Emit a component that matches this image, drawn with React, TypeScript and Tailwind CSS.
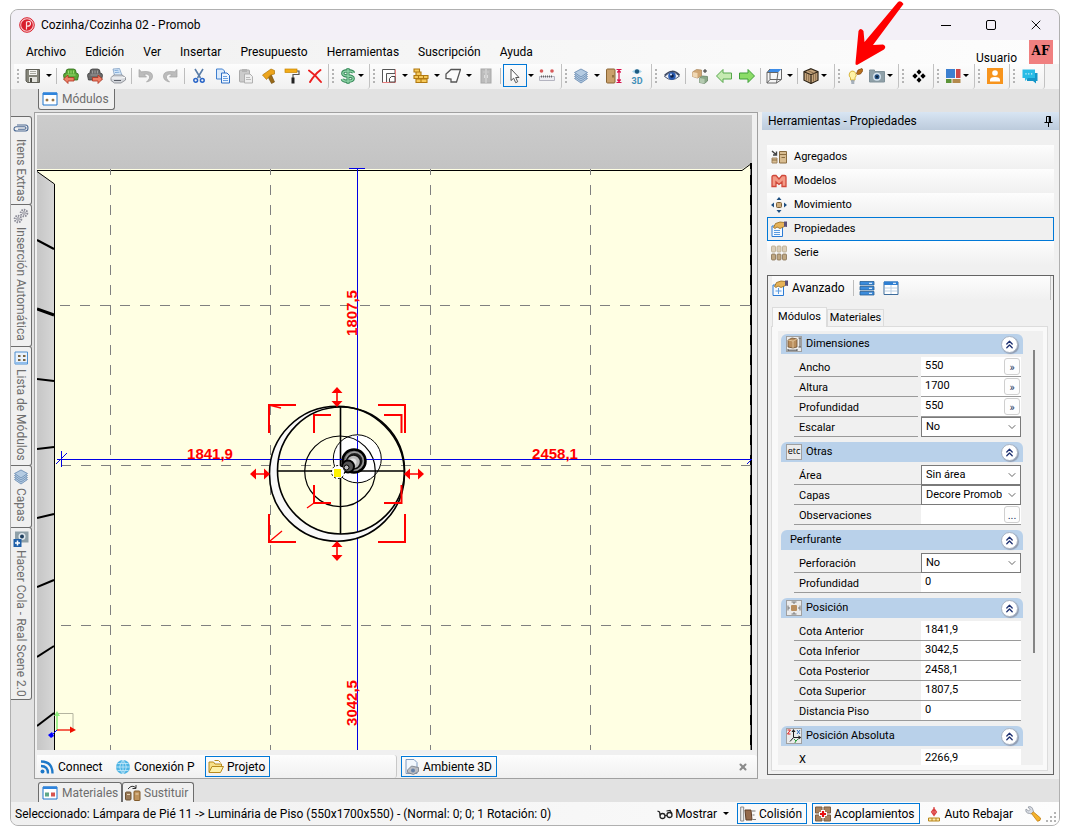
import { useState } from "react";
import type { ReactNode } from "react";
import { ChevronDown, ChevronsUp, X } from "lucide-react";

type TIconProps = {
    children: ReactNode;
    size?: number;
};

function Ico({ children, size = 16 }: TIconProps) {
    return (
        <svg width={size} height={size} viewBox="0 0 16 16" fill="none" className="shrink-0" aria-hidden="true">
            {children}
        </svg>
    );
}

const SaveIcon = () => (
    <Ico>
        <path d="M1 1.500h13.500v13H2.500L1 13z" fill="#85857a" stroke="#5c5c54" />
        <rect x="4" y="2" width="8" height="5" fill="#f4f4f0" />
        <path d="M5 3.500h6M5 5.500h6" stroke="#a9a9a0" />
        <rect x="4" y="9" width="8" height="5" fill="#e2e2dc" />
        <rect x="5" y="10" width="2" height="4" fill="#4c4c44" />
    </Ico>
);

const Chair = ({ dark }: { dark?: boolean }) => (
    <Ico>
        <path
            d="M3 4Q3 1 5.500 1h5Q13 1 13 4v1q2.500 0 2.500 2.500L14.500 12h-13L.500 7.500Q.500 5 3 5z"
            fill={dark ? "#6a6a6a" : "#5aa838"}
            stroke={dark ? "#3c3c3c" : "#2f6a18"}
            strokeWidth=".8"
        />
        <path d="M5.500 2.500v3M8 2.500v3M10.500 2.500v3M3.500 7h9" stroke={dark ? "#9d9d9d" : "#9adc6c"} />
        {dark ? (
            <path d="M15.500 11L11 7v2.500H5.500v3.500H11v2.500z" fill="#ee8068" stroke="#b03420" strokeWidth=".8" />
        ) : (
            <path d="M.500 11L5 7v2.500h6v3.500H5v2.500z" fill="#ee8068" stroke="#b03420" strokeWidth=".8" />
        )}
    </Ico>
);

const PrinterIcon = () => (
    <Ico>
        <path d="M3 1l6.500-.5 2.500 7H4.500z" fill="#d8eafa" stroke="#7f9ec2" strokeWidth=".8" />
        <path d="M4.500 2.500l4-.3M5 4.500l4.500-.3" stroke="#6c9ad0" strokeWidth=".8" />
        <path d="M1 9.500L4 7h8l3.500 2.500V12L11 15H4.500L1 12.500z" fill="#d4d7dc" stroke="#80848c" strokeWidth=".8" />
        <path d="M1.500 10h9.500l4-.5" stroke="#fff" />
        <path d="M4 12.500h7" stroke="#5b5f68" />
    </Ico>
);

const UndoIcon = ({ flip }: { flip?: boolean }) => (
    <Ico>
        <path
            d={
                flip
                    ? "M15 1.500V9H7.500L10 6.500Q6.500 5 4.800 7.500T7.500 14Q1 12.500 1.500 7.500T12.500 3.800z"
                    : "M1 1.500V9h7.500L6 6.500Q9.500 5 11.200 7.500T8.500 14Q15 12.500 14.500 7.500T3.500 3.800z"
            }
            fill="#bcbcbc"
            stroke="#a4a4a4"
            strokeWidth=".7"
        />
    </Ico>
);

const CutIcon = () => (
    <Ico>
        <path d="M4 1l5.500 9M12 1L6.500 10" stroke="#5b7ea8" strokeWidth="1.600" />
        <circle cx="4.700" cy="12.300" r="1.900" stroke="#2a66c8" strokeWidth="1.500" />
        <circle cx="11.300" cy="12.300" r="1.900" stroke="#2a66c8" strokeWidth="1.500" />
    </Ico>
);

const CopyIcon = () => (
    <Ico>
        <path d="M1.500 1h6l2 2v8h-8z" fill="#dcebfb" stroke="#3f7fcf" />
        <path d="M6.500 5h5.500l2.500 2.500v7.500h-8z" fill="#eef6ff" stroke="#2e6fc4" />
        <path d="M8 8.500h4M8 10.500h5M8 12.500h5" stroke="#6ba0e0" />
    </Ico>
);

const PasteIcon = () => (
    <Ico>
        <rect x="1.500" y="2" width="10" height="12" rx="1" fill="#cbcbcb" stroke="#ababab" />
        <rect x="4" y="1" width="5" height="3" fill="#b4b4b4" />
        <path d="M6.500 6h5.500l2.500 2.500v6.500h-8z" fill="#eee" stroke="#b0b0b0" />
        <path d="M8 9.500h4M8 11.500h5" stroke="#bbb" />
    </Ico>
);

const HammerIcon = () => (
    <Ico>
        <path d="M6.500 8l3.500-2 3.500 8-3 1.500z" fill="#9a6a18" stroke="#6b480c" strokeWidth=".6" />
        <path d="M1.500 7L10 1l3.500 1.500V6l-4 1-4 4.500z" fill="#eca41d" stroke="#b07808" strokeWidth=".7" />
    </Ico>
);

const RollerIcon = () => (
    <Ico>
        <rect x="1" y="1" width="12" height="3.500" fill="#f2ac18" stroke="#c98500" strokeWidth=".7" />
        <path d="M13 3h2v3.500H9V10" stroke="#555" strokeWidth="1.200" />
        <rect x="7.500" y="9.500" width="3" height="6" fill="#222" />
    </Ico>
);

const DeleteIcon = () => (
    <Ico>
        <path d="M2 2.500q6 4 12 11.500M13.500 2Q8 6 3 14" stroke="#ec2020" strokeWidth="2" strokeLinecap="round" />
    </Ico>
);

const DollarIcon = () => (
    <Ico>
        <path d="M8 0v16" stroke="#3a8a5c" strokeWidth="3" />
        <path d="M13.500 5Q13 2.800 8 2.800T2.800 5.300 8 8t5.200 2.600T8 13.200 2.300 11" stroke="#3a8a5c" strokeWidth="3.400" />
        <path d="M13.500 5Q13 2.800 8 2.800T2.800 5.300 8 8t5.200 2.600T8 13.200 2.300 11M8 .500v15" stroke="#8fd6a8" strokeWidth="1.300" />
    </Ico>
);

const PlanIcon = () => (
    <Ico>
        <path d="M1.500 14.500v-13H14v4H5.500v9z" fill="#fff" stroke="#555" />
        <path d="M1.500 14.500H14.500V1.500" stroke="#e88080" />
        <path d="M8.500 14v-3.500l2-2h3.500V14z" fill="#fff" stroke="#444" />
    </Ico>
);

const BrickIcon = () => (
    <Ico>
        <g fill="#f6c95a" stroke="#b07810" strokeWidth="1.100">
            <path d="M1 1h5.500v3H1zM1 7.500h4.500v3H1zM5.500 7.500h5v3h-5zM10.500 7.500h4.500v3h-4.500zM3 11h5v3.500H3zM8 11h6v3.500H8zM3 4h5v3.500H3z" />
        </g>
    </Ico>
);

const ShapeIcon = () => (
    <Ico>
        <path d="M6 1.500h9.500L11.500 14H6V11L1 10.500V6z" fill="#fafafa" stroke="#555" strokeWidth="1.300" />
    </Ico>
);

const CabinetIcon = () => (
    <Ico>
        <rect x="3" y="1" width="10" height="14" fill="#bcbcbc" stroke="#a8a8a8" />
        <path d="M8 1v14M5.500 4h1M9.500 4h1M6.500 7v3M9.500 7v3" stroke="#dedede" />
    </Ico>
);

const CursorIcon = () => (
    <Ico>
        <path d="M4 1v11.500l2.700-2.300 2 4.500 2-1-2-4.200H12z" fill="#fff" stroke="#555" />
    </Ico>
);

const MeasureIcon = () => (
    <Ico>
        <circle cx="2.500" cy="3" r="1.800" fill="#d85a5a" />
        <circle cx="13" cy="3" r="1.800" fill="#d85a5a" />
        <path d="M.500 8.500h15v4H.500z" fill="#ececf2" stroke="#b4b4c0" />
        <path d="M2.500 7.500v2M4.500 7.500v2M6.500 7.500v2M8.500 7.500v2M10.500 7.500v2M12.500 7.500v2" stroke="#666" />
    </Ico>
);

const LayersIcon = () => (
    <Ico>
        {[11.5, 9.5, 7.5, 5.5].map((y) => (
            <path
                key={y}
                d={`M1.500 ${y - 1}L8 ${y - 4.5}l6.500 3.500L8 ${y + 3.5}z`}
                fill="#b4cbe2"
                stroke="#6f90b4"
                strokeWidth=".9"
            />
        ))}
    </Ico>
);

const DoorIcon = () => (
    <Ico>
        <rect x=".500" y="1" width="8.500" height="14" rx="1" fill="#c9a06b" stroke="#8a6534" />
        <path d="M7 7v2.500" stroke="#5b4018" />
        <path
            d="M10.500 1.500h5M10.500 14.500h5M13 2v12M11.300 4.500L13 2.500l1.700 2M11.300 11.500l1.700 2 1.700-2"
            stroke="#d8104c"
            strokeWidth="1.200"
        />
    </Ico>
);

const Eye3DIcon = () => (
    <Ico>
        <path d="M3 3.500Q8-1 13 3.500 8 8 3 3.500z" fill="#a9d6ec" />
        <circle cx="8" cy="3.500" r="2.200" fill="#1d5a80" />
        <text x="8" y="15.500" textAnchor="middle" fontSize="9" fontWeight="bold" fill="#3f8fb8" fontFamily="Roboto, sans-serif">
            3D
        </text>
    </Ico>
);

const EyeIcon = () => (
    <Ico>
        <path d="M.500 8.500Q8 .500 15.500 8 8 15 .500 8.500z" fill="#f1f3f8" stroke="#4a5670" />
        <path d="M.500 7.500Q8-.5 15.500 7" stroke="#3b4660" strokeWidth="1.500" />
        <circle cx="8" cy="8" r="3.800" fill="#2a5cb4" />
        <circle cx="8" cy="8" r="1.800" fill="#0c1f48" />
        <circle cx="7" cy="6.500" r="1" fill="#dce9ff" />
    </Ico>
);

const BoxesIcon = () => (
    <Ico>
        <path d="M.500 4l4-2.500 5 .5v6l-4 2-5-1.500z" fill="#d0a673" stroke="#a8845a" strokeWidth=".7" />
        <path d="M.500 4l5 1v5l-5-1.500z" fill="#f0d8b4" />
        <path d="M7.500 10l3-2 5 .5V13l-3 2.500-5-1z" fill="#8aa888" stroke="#5c7a5a" strokeWidth=".7" />
        <path d="M7.500 10l5 1v4.500l-5-1z" fill="#b4cab0" />
        <path d="M13 1v4M11 3h4" stroke="#333" />
    </Ico>
);

const GreenArrow = ({ right }: { right?: boolean }) => (
    <Ico>
        {right ? (
            <path d="M15.500 8L9 1.500V5H.500v6H9v3.500z" fill="#8cdc68" stroke="#3f9f38" />
        ) : (
            <path d="M.500 8L7 1.500V5h8.500v6H7v3.500z" fill="#c6eab2" stroke="#57a84c" />
        )}
    </Ico>
);

const WireCubeIcon = () => (
    <Ico>
        <path d="M4 1h11.500L12 4.500H1z" fill="#3c8ce8" />
        <path d="M1 4.500h11L10.500 15H1zM15.500 1v10.500L10.500 15M4 5v6.500L1 15M4 11.500h11M4 1L1 4.500" stroke="#666" />
    </Ico>
);

const WoodCubeIcon = () => (
    <Ico>
        <path d="M8 .700l7 3v8.500l-7 3.300-7-3.300V3.700z" fill="#c4a47c" stroke="#2e2417" strokeWidth="1.200" />
        <path d="M1 3.700l7 3 7-3M8 6.700v8.500" stroke="#2e2417" strokeWidth="1.200" />
        <path d="M3.500 5v7.500M5.700 6v7.500M10.500 6v7.500M12.700 5v7.500M4.500 2.500l7 3" stroke="#7e6240" strokeWidth=".8" />
    </Ico>
);

const BulbIcon = () => (
    <Ico>
        <path d="M5 3a4 4 0 0 1 3 6.800V12H3.500V9.800A4 4 0 0 1 5 3z" fill="#fff3a8" stroke="#d9b63c" />
        <path d="M4 13h3.500M4.300 15h3" stroke="#8d9aa8" strokeWidth="1.400" />
        <path d="M9.500 5.500l1.500-3.500 4-1.500 1 2L13.500 6l-3 .5z" fill="#b8701e" stroke="#7a400c" strokeWidth=".7" />
    </Ico>
);

const CameraIcon = () => (
    <Ico>
        <path d="M.500 3.500V2h5v1.500h10v10.500H.500z" fill="#8fa0a8" stroke="#80929a" />
        <circle cx="8" cy="8.800" r="4" fill="#d4e2ee" />
        <circle cx="8" cy="8.800" r="2.500" fill="#234f80" />
        <circle cx="8" cy="8.800" r="1" fill="#0c1a2c" />
    </Ico>
);

const DiamondsIcon = () => (
    <Ico>
        <path d="M8 1.300L10.500 4 8 6.700 5.500 4zM8 9.300l2.500 2.700L8 14.700 5.500 12zM4 5.300L6.700 8 4 10.700 1.300 8zM12 5.300L14.700 8 12 10.700 9.300 8z" fill="#000" />
    </Ico>
);

const WindowIcon = () => (
    <Ico>
        <path d="M1 1h9v9H1z" fill="#3c80d0" />
        <path d="M11 1h4.500v9H11z" fill="#cc4848" />
        <path d="M1 11h5.500v4H1z" fill="#5c9438" />
        <path d="M7.500 11h8v4h-8z" fill="#b48a4c" />
    </Ico>
);

const UserIcon = () => (
    <Ico>
        <path d="M0 0h16v16H0z" fill="#f7941d" />
        <circle cx="8" cy="5" r="2.800" fill="#fff" />
        <path d="M3 13.500V12q0-3 5-3t5 3v1.500z" fill="#fff" />
    </Ico>
);

const ChatIcon = () => (
    <Ico>
        <path d="M5 5h10.500v8H14v2.500L11 13H5z" fill="#1496c8" />
        <path d="M.500 1.500H13v8.500H6L3 13v-3H.500z" fill="#29bce6" />
        <path d="M3.500 5.800h1M6.300 5.800h1M9.200 5.800h1" stroke="#fff" strokeWidth="1.200" />
    </Ico>
);

const ModulesIcon = () => (
    <Ico>
        <path d="M1 2h14v12H1z" fill="#fff" stroke="#1f74cc" />
        <path d="M1 1.500h14v2.500H1z" fill="#2f84dc" />
        <circle cx="5" cy="9" r="1.600" fill="#c8a068" />
        <circle cx="11" cy="9" r="1.600" fill="#c8a068" />
        <path d="M5 8v2M11 8v2" stroke="#5a4a34" />
    </Ico>
);

const MaterialsIcon = () => (
    <Ico>
        <path d="M1 2h14v12H1z" fill="#fff" stroke="#1f74cc" />
        <path d="M1 1.500h14V4H1z" fill="#2f84dc" />
        <path d="M3 7.500h4v4H3z" fill="#5fa787" />
        <path d="M9 7.500h4v4H9z" fill="#d85450" />
    </Ico>
);

const SwapIcon = () => (
    <Ico>
        <path d="M3 4q4-5 8-1M11 0v3.500H7.500" stroke="#333" />
        <rect x=".500" y="7" width="5.500" height="8" rx="1" fill="#9a7a58" stroke="#6d5233" />
        <rect x="9" y="6" width="6" height="9.500" rx="1" fill="#bf935c" stroke="#805a2a" />
        <path d="M2 9.500h3M10.500 9h3" stroke="#ecd6b4" />
    </Ico>
);

const ClipIcon = () => (
    <Ico>
        <path
            d="M4 5h8.500q2.500 0 2.500 3t-2.500 3H3.500Q1 11 1 9t2-2.200h8.500q1.500 0 1.500 1.200T11.500 9.200H5"
            stroke="#4c6a94"
            strokeWidth="1.100"
        />
    </Ico>
);

const GearsIcon = () => (
    <Ico>
        <circle cx="11" cy="5" r="3.300" stroke="#8e8e9a" strokeWidth="2" strokeDasharray="1.500 1" />
        <circle cx="11" cy="5" r="1.300" stroke="#8e8e9a" />
        <circle cx="5" cy="11" r="3.300" stroke="#8e8e9a" strokeWidth="2" strokeDasharray="1.500 1" />
        <circle cx="5" cy="11" r="1.300" stroke="#8e8e9a" />
    </Ico>
);

const ListIcon = () => (
    <Ico>
        <path d="M2 2h12.500v12H2z" fill="#e8f1fb" stroke="#4e8fd0" />
        <path d="M2.500 13h11.500" stroke="#8fbdec" strokeWidth="2" />
        <path d="M5 5h2.500v2H5zM10 5h2.500v2H10zM5 9h2.500v2H5zM10 9h2.500v2H10z" fill="#7a6440" />
    </Ico>
);

const QueueIcon = () => (
    <Ico>
        <path d="M2 .500h13.500v11H2z" fill="#8fa0a8" />
        <circle cx="9" cy="5.500" r="3.500" fill="#dfe8ee" />
        <circle cx="9" cy="5.500" r="2" fill="#20405e" />
        <path d="M.500 8h8v8h-8z" fill="#1f5fa8" />
        <path d="M4.500 9.500v5M2 12h5" stroke="#fff" strokeWidth="1.500" />
    </Ico>
);

const AddIcon = () => (
    <Ico>
        <path d="M1 2l4.500 4M5.500 2.500V6H2" stroke="#444" strokeWidth="1.400" />
        <path d="M1 9h5v5H1z" fill="#d8bc90" stroke="#a08460" />
        <path d="M8.500 2.500h7v11.500h-7z" fill="#d8bc90" stroke="#8a6c40" />
        <path d="M1 11h5M8.500 5.500h7M10.500 8.500h3.500" stroke="#8a6c40" />
    </Ico>
);

const ModelsIcon = () => (
    <Ico>
        <path
            d="M1 13.500V4q0-1.500 1.500-1.500H5L8 6l3-3.500h2.500Q15 2.500 15 4v9.500h-4V9L8 11.500 5 9v4.500z"
            fill="#f39a86"
            stroke="#d0483a"
            strokeWidth="1.300"
        />
    </Ico>
);

const MoveIcon = () => (
    <Ico>
        <rect x="5.500" y="5.500" width="5" height="5" rx="1" fill="#cfae7e" stroke="#7e6238" />
        <path d="M8 0l2.500 3h-5zM8 16l2.500-3h-5zM0 8l3-2.500v5zM16 8l-3-2.500v5z" fill="#1f4f80" />
    </Ico>
);

const PropsIcon = ({ plus }: { plus?: boolean }) => (
    <Ico>
        <path d="M1 5h10.500v10.500H1z" fill="#f4f9ff" stroke="#2a7ad4" />
        {plus ? (
            <path d="M6.500 8v6M3.500 11h6" stroke="#5c9ce0" />
        ) : (
            <path d="M3 9.500h6M3 11.500h6M3 13.500h6" stroke="#5c9ce0" />
        )}
        <path d="M2.500 6.500L4.500 2.500 9 1l4.500.5V5.500L9 7.500 6 6 4 7.500z" fill="#e6b258" stroke="#94691c" strokeWidth=".8" />
        <path d="M13 .500h3V6l-3-.5z" fill="#5a5078" />
    </Ico>
);

const SeriesIcon = () => (
    <Ico>
        {[0, 5.5, 11].map((x) => (
            <g key={x}>
                <rect x={x + 0.5} y="1" width="4" height="6" rx="1" fill="#dccfba" stroke="#b8a98c" strokeWidth=".8" />
                <rect x={x + 0.5} y="9" width="4" height="6" rx="1" fill="#bfa782" stroke="#857050" strokeWidth=".8" />
            </g>
        ))}
    </Ico>
);

const RowsIcon = () => (
    <Ico>
        <path d="M1 1.500h14v3.500H1zM1 6.500h14V10H1zM1 11.500h14V15H1z" fill="#3c8cdc" stroke="#2a5f94" strokeWidth=".8" />
        <path d="M10 3.300h3M10 8.300h3M10 13.300h3" stroke="#fff" />
    </Ico>
);

const TableIcon = () => (
    <Ico>
        <path d="M1 2h14v12.500H1z" fill="#fff" stroke="#3d6c9c" />
        <path d="M1 1.500h14V5H1z" fill="#2f7fd2" />
        <path d="M10 3.300h3" stroke="#fff" />
        <path d="M2 8h12M2 11h12M8 5v9" stroke="#bcd0e4" />
    </Ico>
);

const DimIcon = () => (
    <Ico>
        <path d="M2 4l4-2 5 1v8l-4 1-5-1z" fill="#b98e5e" stroke="#6f5130" strokeWidth=".8" />
        <path d="M2 4l5 1 4-2M7 5v7" stroke="#e8cfa6" strokeWidth=".8" />
        <path d="M12.500 2h3M12.500 11h3M14 2v9M2 13v2.500M11 13v2.500M2 14.200h9" stroke="#555" />
    </Ico>
);

const PosIcon = () => (
    <Ico>
        <rect x="5" y="5" width="6" height="6" rx="1" fill="#b98e5e" />
        <path d="M5.500 2h5M8 2v2M5.500 14h5M8 12v2M2 5.500v5M2 8h2M14 5.500v5M12 8h2" stroke="#777" />
    </Ico>
);

const AxisIcon = () => (
    <Ico>
        <path d="M7.500 3v6.500H14M7.500 9.500L4 13.500" stroke="#222" />
        <path d="M7.500 1L5.500 4h4zM15.500 9.500l-3-2v4z" fill="#222" />
        <path d="M1.500 2h3l-3 4h3" stroke="#e02020" />
        <path d="M11 2l3 4M14 2l-3 4" stroke="#2f6fc0" />
        <path d="M8 11l2 2 2-2M10 13l-1.500 2.500" stroke="#2a9a3a" />
    </Ico>
);

const ConnectIcon = () => (
    <Ico>
        <circle cx="3.500" cy="12.500" r="2" fill="#1d78c8" />
        <path d="M2 7q7 0 7 7.500M2 2.500q11.500 0 11.500 12" stroke="#1d78c8" strokeWidth="2.300" />
    </Ico>
);

const GlobeIcon = () => (
    <Ico>
        <circle cx="8" cy="8" r="7" fill="#4db4e4" />
        <path
            d="M8 1v14M1 8h14M2.500 4.500h11M2.500 11.500h11M8 1Q1.500 8 8 15M8 1q6.500 7 0 14"
            stroke="#c8eafa"
            strokeWidth=".8"
        />
    </Ico>
);

const FolderIcon = () => (
    <Ico>
        <path d="M1 13V3h4.500l1.500 2h6.500v3" fill="#f7e08a" stroke="#b88a1c" />
        <path d="M1 13.500L4 7.500h11.500l-3 6z" fill="#fdf0a8" stroke="#b88a1c" />
        <path d="M6.500 1.500h4l2 2" stroke="#b88a1c" />
    </Ico>
);

const RoomIcon = () => (
    <Ico>
        <path d="M2 .500h8l3 3v11H2z" fill="#f2f7fd" stroke="#7d9ac0" />
        <path d="M3.500 11l4-4 7 1.500v4l-5 3-6-2z" fill="#b9bcc2" stroke="#777b84" strokeWidth=".8" />
        <circle cx="9" cy="11.500" r="2" fill="#6882a8" />
    </Ico>
);

const GlassesIcon = () => (
    <Ico>
        <circle cx="5.500" cy="10" r="2.500" stroke="#222" strokeWidth="1.300" />
        <circle cx="12.500" cy="9" r="2.500" stroke="#222" strokeWidth="1.300" />
        <path d="M.500 5l2 1 .8 3.500M8 9.500h2M9.500 5l3.500-.5 2 3" stroke="#222" strokeWidth="1.200" />
    </Ico>
);

const CollisionIcon = () => (
    <Ico>
        <path d="M.700 1h3v14h-3z" fill="#eee" stroke="#888" />
        <path d="M5 4h6l1 10H6z" fill="#946a4c" stroke="#5e3e26" />
        <path d="M12 5h3.500M12.500 9h2M12.500 13.500h3.500" stroke="#777" />
    </Ico>
);

const CouplingIcon = () => (
    <Ico>
        <path d="M.500 1h6.500v6H.500zM9 1h6.500v6H9zM.500 9h6.500v6H.500zM9 9h6.500v6H9z" fill="#a5815f" stroke="#7a5c40" />
        <path d="M8 4v8M4 8h8" stroke="#fff" strokeWidth="4" />
        <path d="M8 5v6M5 8h6" stroke="#e81010" strokeWidth="2.200" />
    </Ico>
);

const LowerIcon = () => (
    <Ico>
        <path d="M8 1v8M5.500 6L8 9.500 10.500 6 8 2.500z" fill="#f08080" stroke="#d84040" strokeWidth="1.200" />
        <path d="M2.500 12h11v3h-11z" fill="#fbe8a8" stroke="#b8861c" />
        <path d="M6 12v3M10 12v3" stroke="#b8861c" />
    </Ico>
);

const WrenchIcon = () => (
    <Ico>
        <path
            d="M1 3l2.500 2L5 3.500 3 1q4-1.500 5 3l.500 2L6.500 8 4.500 7.500Q0 7 1 3z"
            fill="#d8dce4"
            stroke="#8c929c"
            strokeWidth=".8"
        />
        <path d="M6.500 7.500l2-1.500 7 6q.5 3-3 3.300z" fill="#f5b32c" stroke="#c07c10" strokeWidth=".8" />
    </Ico>
);

function Caret() {
    return (
        <svg width="6" height="3" viewBox="0 0 6 3" className="shrink-0" aria-hidden="true">
            <path d="M0 0h6L3 3z" fill="#000" />
        </svg>
    );
}

function Grip() {
    return (
        <div className="w-2 h-[23px] shrink-0 flex flex-col items-center justify-center gap-[2px]">
            <i className="w-[2px] h-[2px] bg-[#b4b4b4]" />
            <i className="w-[2px] h-[2px] bg-[#b4b4b4]" />
            <i className="w-[2px] h-[2px] bg-[#b4b4b4]" />
            <i className="w-[2px] h-[2px] bg-[#b4b4b4]" />
        </div>
    );
}

function Sep() {
    return (
        <div className="w-[5px] h-[23px] shrink-0 flex items-center justify-center">
            <i className="w-px h-4 bg-[#bdbdbd]" />
        </div>
    );
}

type TToolProps = {
    label: string;
    children: ReactNode;
    wide?: boolean;
};

function Tool({ label, children, wide }: TToolProps) {
    return (
        <button
            aria-label={label}
            className={`${wide ? "w-6" : "w-[23px]"} h-[23px] shrink-0 flex items-center justify-center hover:bg-sky-100`}
        >
            {children}
        </button>
    );
}

function DropTool({ label, children, tight }: TToolProps & { tight?: boolean }) {
    return (
        <button
            aria-label={label}
            className={`h-[23px] shrink-0 flex items-center pl-[3px] hover:bg-sky-100 ${
                tight ? "w-[29px] gap-[2px]" : "w-8 gap-[5px]"
            }`}
        >
            {children}
            <Caret />
        </button>
    );
}

function ToolGroup({ width, children }: { width: string; children: ReactNode }) {
    return (
        <div
            className={`${width} h-[25px] shrink-0 flex items-start border-r border-[#c2c2c2] rounded-b-[3px] bg-linear-to-b from-[#fdfdfd] to-[#f0f0f0]`}
        >
            <Grip />
            {children}
        </div>
    );
}

function Toolbar() {
    return (
        <div className="h-[25px] shrink-0 pl-[3px] flex bg-[#f3f3f3] overflow-hidden">
            <ToolGroup width="w-[315px]">
                <DropTool label="Guardar"><SaveIcon /></DropTool>
                <Sep />
                <Tool label="Importar" wide><Chair /></Tool>
                <Tool label="Exportar"><Chair dark /></Tool>
                <Tool label="Imprimir"><PrinterIcon /></Tool>
                <Sep />
                <Tool label="Deshacer" wide><UndoIcon /></Tool>
                <Tool label="Rehacer" wide><UndoIcon flip /></Tool>
                <Sep />
                <Tool label="Cortar" wide><CutIcon /></Tool>
                <Tool label="Copiar"><CopyIcon /></Tool>
                <Tool label="Pegar"><PasteIcon /></Tool>
                <Tool label="Martillo"><HammerIcon /></Tool>
                <Tool label="Pintar"><RollerIcon /></Tool>
                <Tool label="Eliminar"><DeleteIcon /></Tool>
            </ToolGroup>
            <ToolGroup width="w-[41px]">
                <DropTool label="Precio" tight><DollarIcon /></DropTool>
            </ToolGroup>
            <ToolGroup width="w-[192px]">
                <DropTool label="Planta"><PlanIcon /></DropTool>
                <DropTool label="Paredes"><BrickIcon /></DropTool>
                <DropTool label="Formas"><ShapeIcon /></DropTool>
                <Tool label="Armario" wide><CabinetIcon /></Tool>
                <Sep />
                <button
                    aria-label="Seleccionar"
                    className="w-6 h-[23px] shrink-0 flex items-center justify-center border border-[#0078d7]"
                >
                    <CursorIcon />
                </button>
                <button aria-label="Opciones" className="w-2 h-[23px] shrink-0 flex items-center justify-center">
                    <Caret />
                </button>
                <Tool label="Cotas" wide><MeasureIcon /></Tool>
            </ToolGroup>
            <ToolGroup width="w-[90px]">
                <DropTool label="Capas"><LayersIcon /></DropTool>
                <Tool label="Altura"><DoorIcon /></Tool>
                <Tool label="Vista 3D"><Eye3DIcon /></Tool>
            </ToolGroup>
            <ToolGroup width="w-[183px]">
                <Tool label="Visualizar"><EyeIcon /></Tool>
                <Sep />
                <Tool label="Bloques" wide><BoxesIcon /></Tool>
                <Tool label="Anterior"><GreenArrow /></Tool>
                <Tool label="Siguiente"><GreenArrow right /></Tool>
                <Sep />
                <DropTool label="Perspectiva"><WireCubeIcon /></DropTool>
                <Sep />
                <DropTool label="Texturas" tight><WoodCubeIcon /></DropTool>
            </ToolGroup>
            <ToolGroup width="w-16">
                <Tool label="Iluminación"><BulbIcon /></Tool>
                <DropTool label="Cámara" tight><CameraIcon /></DropTool>
            </ToolGroup>
            <ToolGroup width="w-[35px]">
                <Tool label="Plugins" wide><DiamondsIcon /></Tool>
            </ToolGroup>
            <ToolGroup width="w-[41px]">
                <DropTool label="Ventanas" tight><WindowIcon /></DropTool>
            </ToolGroup>
            <ToolGroup width="w-[35px]">
                <Tool label="Cuenta" wide><UserIcon /></Tool>
            </ToolGroup>
            <ToolGroup width="w-[35px]">
                <Tool label="Chat" wide><ChatIcon /></Tool>
            </ToolGroup>
        </div>
    );
}

const MENUS = ["Archivo", "Edición", "Ver", "Insertar", "Presupuesto", "Herramientas", "Suscripción", "Ayuda"];

function TitleBar() {
    return (
        <div className="h-[30px] shrink-0 flex items-center pl-2 bg-[#f3f0f7]">
            <Ico>
                <circle cx="8" cy="8" r="7.300" fill="#f8c8cc" stroke="#d81e2c" />
                <circle cx="8" cy="8" r="5.800" fill="#d81e2c" />
                <path d="M7.500 12.500V5q4-1.500 4 1.500T7.500 9" stroke="#fbe0e2" strokeWidth="1.200" />
            </Ico>
            <h1 className="pl-[6px] flex-1">Cozinha/Cozinha 02 - Promob</h1>
            <div className="flex pr-px">
                <button aria-label="Minimizar" className="w-[45px] h-7 flex items-center justify-center">
                    <i className="w-[10px] h-px bg-black" />
                </button>
                <button aria-label="Maximizar" className="w-[45px] h-7 flex items-center justify-center">
                    <i className="w-[10px] h-[10px] border border-black rounded-[2px]" />
                </button>
                <button aria-label="Cerrar" className="w-[45px] h-7 flex items-center justify-center">
                    <X size={16} strokeWidth={1.4} />
                </button>
            </div>
        </div>
    );
}

function MenuBar() {
    return (
        <div className="h-6 shrink-0 flex bg-linear-to-r from-[#f0f0f0] to-[#fdfdfd]">
            <nav className="flex-1 flex items-center gap-[19px] pl-[15px]">
                {MENUS.map((m) => (
                    <button key={m}>{m}</button>
                ))}
            </nav>
            <div className="flex items-end pr-[6px] gap-3">
                <span className="leading-3">Usuario</span>
                <div className="w-6 h-6 pr-px bg-[#f08080] font-['DejaVu_Serif',serif] font-bold text-xs leading-[22px] text-center">
                    AF
                </div>
            </div>
        </div>
    );
}

const SIDE_TABS = [
    { name: "Itens Extras", icon: <ClipIcon />, height: "h-[89px]" },
    { name: "Inserción Automática", icon: <GearsIcon />, height: "h-[143px]" },
    { name: "Lista de Módulos", icon: <ListIcon />, height: "h-[120px]" },
    { name: "Capas", icon: <LayersIcon />, height: "h-[63px]" },
    { name: "Hacer Cola - Real Scene 2.0", icon: <QueueIcon />, height: "h-[173px]" },
];

function SideTabs() {
    return (
        <div className="w-[23px] shrink-0 pt-1 flex flex-col">
            {SIDE_TABS.map((t) => (
                <button
                    key={t.name}
                    className={`${t.height} w-[21px] shrink-0 flex flex-col items-center gap-[3px] pt-[3px] border-t border-r border-b -mb-px border-[#6d6d6d] rounded-r-[3px] bg-[#f0f0f0] text-[#6d6d6d] whitespace-nowrap`}
                >
                    {t.icon}
                    <span className="[writing-mode:vertical-rl]">{t.name}</span>
                </button>
            ))}
        </div>
    );
}

const WALL_SEAMS = [
    [240, 249, 2],
    [309, 315, 3],
    [379, 381, 2],
    [449, 447, 2],
    [518, 514, 2],
    [587, 580, 2],
    [657, 646, 2],
    [726, 713, 2],
];

function ResizeArrow({ x, y, rotate }: { x: number; y: number; rotate?: boolean }) {
    return (
        <path
            d="M-10 0l6-5.500v4.700h8v-4.700L10 0 4 5.500v-4.700h-8v4.700z"
            fill="#f00"
            transform={`translate(${x} ${y})${rotate ? " rotate(90)" : ""}`}
        />
    );
}

function Scene() {
    const dim = {
        fill: "#f00",
        fontSize: 15,
        fontWeight: 700,
        fontFamily: "'Liberation Sans', Arial, sans-serif",
        textAnchor: "middle" as const,
    };

    return (
        <svg
            viewBox="37 115 715 635"
            preserveAspectRatio="xMinYMin slice"
            className="block w-full flex-1 min-h-0"
            role="img"
            aria-label="Vista superior del ambiente"
        >
            <defs>
                <linearGradient id="back" x1="0" y1="0" x2="0" y2="1">
                    <stop offset="0" stopColor="#cccccc" />
                    <stop offset="1" stopColor="#c3c3c3" />
                </linearGradient>
                <linearGradient id="wall" x1="0" y1="0" x2="1" y2="0">
                    <stop offset="0" stopColor="#c6c6c6" />
                    <stop offset="1" stopColor="#d6d6d6" />
                </linearGradient>
            </defs>
            <rect x="37" y="115" width="715" height="55" fill="url(#back)" />
            <path d="M37 169h705l10-6v587H37z" fill="#ffffe3" />
            <path d="M37 171l17 13v566H37z" fill="url(#wall)" />
            <path d="M37 170.500h705l9.500-7" stroke="#000" fill="none" />
            <path d="M37 171.500l17.500 12.500V750" stroke="#000" fill="none" />
            {WALL_SEAMS.map(([a, b, w]) => (
                <path key={a} d={`M37 ${a}L54 ${b}`} stroke="#000" strokeWidth={w} />
            ))}

            <path d="M751 163v587" stroke="#000" strokeWidth="2" />
            <g stroke="#808080" strokeDasharray="10 10">
                <path d="M110.500 169v581M270.500 169v581M430.500 169v581M590.500 169v581M750.500 169v581" strokeDashoffset="4" />
                <path d="M60 305.500h692M61 465.500h691M61 625.500h691" />
            </g>

            {/* dimension lines */}
            <path
                d="M357.500 168v582M349 168.500h16M57 459.500h695M61.500 451v16M56 464l11-11M747 464l5-5"
                stroke="#0000e6"
                fill="none"
            />

            {/* lamp */}
            <circle cx="357.300" cy="458.800" r="24" fill="#fff" stroke="#000" />
            <path
                fillRule="evenodd"
                fill="#f8f8f8"
                d="M269.500 473.700a67.500 67.500 0 1 0 135 0a67.500 67.500 0 1 0-135 0zM277.500 470.500a63.500 63.500 0 1 0 127 0a63.500 63.500 0 1 0-127 0z"
            />
            <g fill="none" stroke="#000" strokeWidth="1.600">
                <circle cx="337" cy="473.700" r="67.500" />
                <circle cx="341" cy="470.500" r="63.500" />
                <circle cx="340" cy="471.300" r="35.300" strokeWidth="1.200" />
                <path d="M340.500 407v127M278 471h127" />
            </g>
            <path d="M357.500 436v46M334 459.500h47" stroke="#0000e6" />
            <circle cx="354" cy="461" r="11.500" fill="#6e6e6e" stroke="#000" strokeWidth="2.500" />
            <circle cx="354.500" cy="461" r="8.800" stroke="#9a9a9a" strokeWidth="1.500" fill="#222" />
            <circle cx="353.500" cy="462" r="7" fill="#b8b8b8" stroke="#111" strokeWidth="1.500" />
            <circle cx="353" cy="462" r="3.500" fill="#e2e2e2" />
            <circle cx="348" cy="466.500" r="6" fill="#555" stroke="#000" strokeWidth="2" />
            <circle cx="346.500" cy="467.500" r="2.500" fill="#bbb" stroke="#000" />
            <circle cx="338" cy="472" r="6.500" fill="#fff" stroke="#000" strokeDasharray="2 2" />
            <rect x="334" y="469" width="7" height="8" fill="#fff200" />

            <g stroke="#f00" strokeWidth="2" fill="none">
                <path d="M269 433v-28h27M378 405h27v28M269 514v28h27M378 542h27v-28" />
                <path d="M314 433v-18h17M384 415h17.500v18M314 485v18h17M384 503h17.500v-18" />
                <path d="M269 405l12 3M270 541l12-10M314 503l-7 5" strokeWidth="1.300" />
            </g>
            <ResizeArrow x={337} y={397} rotate />
            <ResizeArrow x={337} y={551} rotate />
            <ResizeArrow x={260} y={474} />
            <ResizeArrow x={414} y={474} />

            <text x="210" y="459" {...dim}>1841,9</text>
            <text x="555" y="459" {...dim}>2458,1</text>
            <text transform="translate(357 313) rotate(-90)" {...dim}>1807,5</text>
            <text transform="translate(357 703) rotate(-90)" {...dim}>3042,5</text>

            {/* axis gizmo */}
            <path d="M57 713.500h16V730" stroke="#b4b4a0" fill="none" />
            <path d="M57 730v-17" stroke="#90ee80" strokeWidth="1.600" />
            <path d="M54 716l3-5 3 5z" fill="#90ee80" />
            <path d="M57 730h14" stroke="#f01000" strokeWidth="1.300" />
            <path d="M70 726.500l6 3.500-6 3z" fill="#f01000" />
            <path d="M57 730l-4 4" stroke="#00f" />
            <path d="M48 735l4-3 2 4-3 2z" fill="#00f" />
        </svg>
    );
}

function BlueButton({ icon, children }: { icon: ReactNode; children: ReactNode }) {
    return (
        <button className="h-[21px] shrink-0 flex items-center gap-[3px] pl-[2px] pr-1 border border-[#0078d7] whitespace-nowrap">
            {icon}
            {children}
        </button>
    );
}

function Viewport() {
    return (
        <main className="flex-1 min-w-0 flex flex-col border border-[#a0a0a0] bg-[#f0f0f0] pl-[2px] pt-[2px]">
            <div className="flex-1 min-h-0 flex flex-col pr-[5px]">
                <Scene />
            </div>
            <div className="h-[28px] shrink-0 pt-[5px] flex gap-1">
                <div className="w-[360px] flex items-center pl-[2px] rounded-r-[3px] border-r border-[#c8c8c8] bg-linear-to-b from-[#fdfdfd] to-[#f0f0f0]">
                    <button className="flex items-center gap-[3px] w-[76px]">
                        <ConnectIcon />
                        Connect
                    </button>
                    <button className="flex items-center gap-[3px] w-[90px] whitespace-nowrap">
                        <GlobeIcon />
                        Conexión P
                    </button>
                    <BlueButton icon={<FolderIcon />}>Projeto</BlueButton>
                </div>
                <div className="flex-1 flex items-center rounded-r-[3px] bg-linear-to-b from-[#fdfdfd] to-[#f0f0f0] pr-[9px]">
                    <BlueButton icon={<RoomIcon />}>Ambiente 3D</BlueButton>
                    <button aria-label="Cerrar vista" className="ml-auto text-[#8a8a8a]">
                        <X size={10} strokeWidth={5} />
                    </button>
                </div>
            </div>
        </main>
    );
}

const NAV = [
    { name: "Agregados", icon: <AddIcon /> },
    { name: "Modelos", icon: <ModelsIcon /> },
    { name: "Movimiento", icon: <MoveIcon /> },
    { name: "Propiedades", icon: <PropsIcon /> },
    { name: "Serie", icon: <SeriesIcon /> },
];

type TRow = {
    label: string;
    value: string;
    kind?: "more" | "select" | "dots";
};

type TSection = {
    title: string;
    icon?: ReactNode;
    split?: boolean;
    rows: TRow[];
};

const SECTIONS: TSection[] = [
    {
        title: "Dimensiones",
        icon: <DimIcon />,
        split: true,
        rows: [
            { label: "Ancho", value: "550", kind: "more" },
            { label: "Altura", value: "1700", kind: "more" },
            { label: "Profundidad", value: "550", kind: "more" },
            { label: "Escalar", value: "No", kind: "select" },
        ],
    },
    {
        title: "Otras",
        icon: <span className="text-[9px] leading-3 pb-[2px] font-['Open_Sans',sans-serif]">etc</span>,
        rows: [
            { label: "Área", value: "Sin área", kind: "select" },
            { label: "Capas", value: "Decore Promob", kind: "select" },
            { label: "Observaciones", value: "", kind: "dots" },
        ],
    },
    {
        title: "Perfurante",
        rows: [
            { label: "Perforación", value: "No", kind: "select" },
            { label: "Profundidad", value: "0" },
        ],
    },
    {
        title: "Posición",
        icon: <PosIcon />,
        rows: [
            { label: "Cota Anterior", value: "1841,9" },
            { label: "Cota Inferior", value: "3042,5" },
            { label: "Cota Posterior", value: "2458,1" },
            { label: "Cota Superior", value: "1807,5" },
            { label: "Distancia Piso", value: "0" },
        ],
    },
    {
        title: "Posición Absoluta",
        icon: <AxisIcon />,
        rows: [{ label: "X", value: "2266,9" }],
    },
];

function PropertyRow({ row, id, split }: { row: TRow; id: string; split?: boolean }) {
    return (
        <div className="h-5 flex">
            <label
                htmlFor={id}
                className={`shrink-0 pl-[5px] leading-[21px] border-b border-[#9a9a9a] ${split ? "w-[124px] mr-[3px]" : "w-[127px]"}`}
            >
                {row.label}
            </label>
            {row.kind == "select" ? (
                <div className="relative flex-1 min-w-0">
                    <select
                        id={id}
                        defaultValue={row.value}
                        className="appearance-none w-full h-5 pl-1 pr-[18px] bg-white border border-[#7a7a7a] overflow-hidden"
                    >
                        <option>{row.value}</option>
                    </select>
                    <ChevronDown
                        size={12}
                        strokeWidth={1.8}
                        className="absolute right-[3px] top-1 text-[#555] pointer-events-none"
                    />
                </div>
            ) : (
                <div className="flex-1 min-w-0 flex bg-white border-b border-[#9a9a9a]">
                    <input id={id} defaultValue={row.value} className="flex-1 min-w-0 pl-1 outline-none" />
                    {row.kind && (
                        <button
                            aria-label={`Editar ${row.label}`}
                            className="w-4 h-[17px] mt-px mr-px shrink-0 border border-[#cfcfcf] rounded-[3px] bg-[#fdfdfd] leading-[17px] text-[#1f3864]"
                        >
                            {row.kind == "more" ? "»" : "..."}
                        </button>
                    )}
                </div>
            )}
        </div>
    );
}

function Section({ section, index }: { section: TSection; index: number }) {
    const [open, setOpen] = useState(true);

    return (
        <section className={open ? "pb-[5px]" : "pb-2"}>
            <div className="h-5 flex items-center gap-1 px-[5px] rounded-t-md bg-[#b9d1ea]">
                {section.icon ? (
                    <span className="w-4 h-4 flex items-center justify-center border border-[#a0a0a0] bg-[#ebebeb] overflow-hidden">
                        {section.icon}
                    </span>
                ) : (
                    <span />
                )}
                <h2 className="flex-1">{section.title}</h2>
                <button
                    aria-label={`Contraer ${section.title}`}
                    onClick={() => setOpen(!open)}
                    className="w-[17px] h-[17px] flex items-center justify-center rounded-full bg-white border border-[#a8b4c4] shadow-[1px_1px_1px_#8f9bb0]"
                >
                    <ChevronsUp size={13} strokeWidth={2.4} className="text-[#1c2f70]" />
                </button>
            </div>
            {open && (
                <div className="pt-[3px] pl-[13px] pr-[2px]">
                    {section.rows.map((r, i) => (
                        <PropertyRow key={r.label} row={r} id={`prop-${index}-${i}`} split={section.split} />
                    ))}
                </div>
            )}
        </section>
    );
}

function PropertiesPanel() {
    const [tool, setTool] = useState("Propiedades");
    const [tab, setTab] = useState("Módulos");

    return (
        <aside className="w-[301px] shrink-0 flex flex-col bg-[#f0f0f0] pl-1 text-[11px]">
            <div className="h-[18px] shrink-0 flex items-center px-[6px] text-xs bg-linear-to-b from-[#d8e5f3] to-[#bccbdc]">
                <h2 className="flex-1">Herramientas - Propiedades</h2>
                <button aria-label="Fijar panel">
                    <svg width="9" height="12" viewBox="0 0 9 12" fill="none" aria-hidden="true">
                        <path d="M2.500 1.500h4v6h-4zM.500 7.500h8M4.500 8v4" stroke="#000" />
                        <path d="M5.500 1v6" stroke="#000" strokeWidth="1.500" />
                    </svg>
                </button>
            </div>
            <div className="shrink-0 pt-[15px] px-[5px]">
                {NAV.map((n) => (
                    <button
                        key={n.name}
                        onClick={() => setTool(n.name)}
                        className={`w-full h-6 flex items-center gap-[7px] pl-[3px] border ${
                            tool == n.name
                                ? "border-[#0078d7] bg-[#f0f0f0]"
                                : "border-transparent bg-linear-to-b from-[#fdfdfd] to-[#f0f0f0] bg-origin-border"
                        }`}
                    >
                        {n.icon}
                        {n.name}
                    </button>
                ))}
            </div>
            <div className="flex-1 min-h-0 mt-[10px] mb-1 mx-[5px] px-[2px] pb-[2px] flex flex-col border border-[#646464]">
                <div className="h-6 shrink-0 flex items-center ml-[2px] gap-2 bg-linear-to-b from-[#fdfdfd] to-[#f0f0f0] border-r border-[#c2c2c2]">
                    <button className="flex items-center gap-1 text-xs">
                        <PropsIcon plus />
                        Avanzado
                    </button>
                    <i className="w-px h-4 bg-[#bdbdbd]" />
                    <button aria-label="Vista lista" className="-ml-[3px]"><RowsIcon /></button>
                    <button aria-label="Vista tabla"><TableIcon /></button>
                </div>
                <div className="h-[26px] shrink-0 pl-[2px] flex items-end">
                    {["Módulos", "Materiales"].map((t) => (
                        <button
                            key={t}
                            onClick={() => setTab(t)}
                            className={`border border-b-0 border-[#dcdcdc] ${
                                tab == t ? "w-[55px] h-5 pb-[1px] bg-[#f9f9f9] relative top-px" : "w-[57px] h-[17px] bg-[#f2f2f2]"
                            }`}
                        >
                            {t}
                        </button>
                    ))}
                </div>
                <div className="flex-1 min-h-0 ml-[1px] mr-[3px] mb-px pl-[6px] pr-1 pt-1 pb-[5px] border border-[#dcdcdc] bg-[#f9f9f9] flex">
                    <div className="flex-1 min-w-0 overflow-hidden bg-[#f0f0f0] pl-[3px] pr-[2px] pt-[3px]">
                        {SECTIONS.map((s, i) => (
                            <Section key={s.title} section={s} index={i} />
                        ))}
                    </div>
                    <div className="w-[18px] shrink-0 flex justify-center bg-[#f0f0f0] pt-[19px]">
                        <i className="w-[2px] h-[73%] bg-[#858585]" />
                    </div>
                </div>
            </div>
        </aside>
    );
}

function StatusBar() {
    return (
        <footer className="h-[23px] shrink-0 flex items-center pl-1 pr-[2px] bg-linear-to-r from-[#f0f0f0] to-[#fdfdfd]">
            <p className="flex-1 truncate">
                Seleccionado: Lámpara de Pié 11 -&gt; Luminária de Piso (550x1700x550) - (Normal: 0; 0; 1 Rotación: 0)
            </p>
            <button className="flex items-center gap-[2px] mr-2">
                <GlassesIcon />
                <span className="pr-1">Mostrar</span>
                <Caret />
            </button>
            <div className="flex gap-[5px]">
                <BlueButton icon={<CollisionIcon />}>Colisión</BlueButton>
                <BlueButton icon={<CouplingIcon />}>Acoplamientos</BlueButton>
            </div>
            <button className="flex items-center gap-[3px] ml-[6px]">
                <LowerIcon />
                Auto Rebajar
            </button>
            <button aria-label="Configuración" className="ml-3">
                <WrenchIcon />
            </button>
            <svg width="12" height="12" viewBox="0 0 12 12" className="self-end ml-1 mb-[2px]" aria-hidden="true">
                <path d="M9 1h2v2H9zM5 5h2v2H5zM9 5h2v2H9zM1 9h2v2H1zM5 9h2v2H5zM9 9h2v2H9z" fill="#b4b4b4" />
            </svg>
        </footer>
    );
}

export default function App() {
    return (
        <div className="relative h-screen min-h-[600px] pt-[9px] pl-[10px] pr-4 pb-[11px] bg-white font-['Roboto',sans-serif] text-xs text-black">
            <div className="h-full flex flex-col overflow-hidden border border-[#b0b0b0] rounded-lg bg-[#e2e2e2]">
                <TitleBar />
                <MenuBar />
                <Toolbar />
                <div className="h-[23px] shrink-0 pl-[27px]">
                    <button className="w-[77px] h-[21px] flex items-center gap-1 pl-[3px] border border-t-0 border-[#6d6d6d] rounded-b-[3px] bg-[#f0f0f0] text-[#6d6d6d]">
                        <ModulesIcon />
                        Módulos
                    </button>
                </div>
                <div className="flex-1 min-h-0 flex">
                    <SideTabs />
                    <Viewport />
                    <PropertiesPanel />
                </div>
                <div className="h-[23px] shrink-0 pl-[27px] flex items-end text-[#6d6d6d]">
                    <button className="w-[84px] h-5 flex items-center gap-1 pl-[3px] border border-b-0 border-[#6d6d6d] rounded-t-[3px] bg-[#f0f0f0]">
                        <MaterialsIcon />
                        Materiales
                    </button>
                    <button className="w-[72px] h-5 flex items-center gap-[3px] pl-[2px] border border-b-0 border-[#6d6d6d] rounded-t-[3px] bg-[#f0f0f0]">
                        <SwapIcon />
                        Sustituir
                    </button>
                </div>
                <StatusBar />
            </div>

            {/* hint arrow over the lighting tool */}
            <svg
                width="60"
                height="70"
                viewBox="0 0 60 70"
                className="absolute top-0 left-[848px] pointer-events-none"
                aria-hidden="true"
            >
                <path d="M50 2Q53 0 55.500 4L25 45l10-.5q4 2 1 5L9 65q-2 0-1.500-2L10.500 31q2-4 5 0l1 11z" fill="#fe0000" />
            </svg>
        </div>
    );
}
